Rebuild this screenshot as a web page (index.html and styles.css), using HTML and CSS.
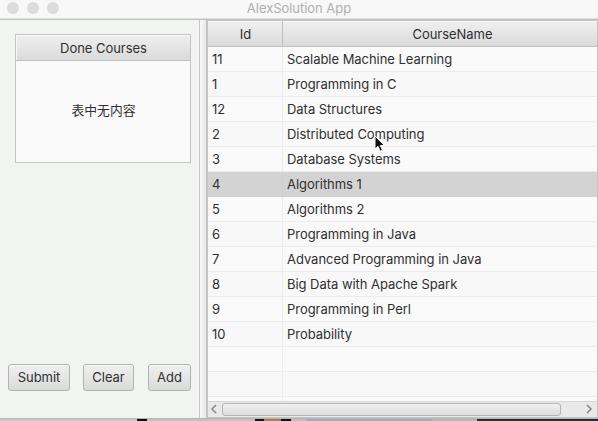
FILE: index.html
```html
<!DOCTYPE html>
<html lang="en">
<head>
<meta charset="utf-8">
<title>AlexSolution App</title>
<link rel="stylesheet" href="styles.css">
</head>
<body>
<div class="window">
  <header class="titlebar">
    <div class="lights"><i></i><i></i><i></i></div>
    <span class="title">AlexSolution App</span>
  </header>
  <main class="split">
    <section class="left">
      <div class="done">
        <div class="done-head">Done Courses</div>
        <div class="done-body" lang="zh">表中无内容</div>
      </div>
      <div class="buttons">
        <button class="submit">Submit</button>
        <button class="clear">Clear</button>
        <button class="add">Add</button>
      </div>
    </section>
    <div class="divider"></div>
    <section class="table">
      <div class="row head"><span>Id</span><span>CourseName</span></div>
      <div class="rows">
        <div class="row"><span>11</span><span>Scalable Machine Learning</span></div>
        <div class="row"><span>1</span><span>Programming in C</span></div>
        <div class="row"><span>12</span><span>Data Structures</span></div>
        <div class="row"><span>2</span><span>Distributed Computing</span></div>
        <div class="row"><span>3</span><span>Database Systems</span></div>
        <div class="row selected"><span>4</span><span>Algorithms 1</span></div>
        <div class="row"><span>5</span><span>Algorithms 2</span></div>
        <div class="row"><span>6</span><span>Programming in Java</span></div>
        <div class="row"><span>7</span><span>Advanced Programming in Java</span></div>
        <div class="row"><span>8</span><span>Big Data with Apache Spark</span></div>
        <div class="row"><span>9</span><span>Programming in Perl</span></div>
        <div class="row"><span>10</span><span>Probability</span></div>
        <div class="row"><span></span><span></span></div>
        <div class="row"><span></span><span></span></div>
        <div class="row"><span></span><span></span></div>
      </div>
      <div class="scroll">
        <svg width="14" height="16" viewBox="0 0 14 16"><path d="M8 4 4 8l4 4"/></svg>
        <div class="thumb"></div>
        <svg class="next" width="14" height="16" viewBox="0 0 14 16"><path d="M4 4l4 4-4 4"/></svg>
      </div>
    </section>
  </main>
  <footer class="desktop"></footer>
</div>
<svg class="cursor" width="12" height="18" viewBox="0 0 12 18"><path d="M1 1v13l3-2.700 2.200 4.900 2.300-1-2.200-4.700H10.500z"/></svg>
</body>
</html>
```

FILE: styles.css
```css
* { box-sizing: border-box; }
body { margin: 0; overflow: hidden; font: 13px/16px Inter, "Noto Sans CJK SC", sans-serif; letter-spacing: -0.04px; color: #303030; }
.window { width: 598px; height: 421px; display: flex; flex-direction: column; background: #f2f4f2; }
.titlebar { height: 20px; flex: none; display: grid; grid-template-columns: 60px 1fr 60px; background: #f7f8f7; border-bottom: 1px solid #c4c4c4; box-shadow: inset 0 -1px #dedede; }
.lights { display: flex; gap: 8px; padding: 2px 0 0 7px; }
.lights i { width: 12px; height: 12px; border-radius: 50%; background: #dcdcdc; }
.title { text-align: center; color: #b0b0b0; line-height: 17px; }
.split { flex: 1; min-height: 0; display: flex; }
.left { width: 200px; border-right: 1px solid #c6c6c6; padding: 14px 8px 27px; display: flex; flex-direction: column; justify-content: space-between; }
.done { width: 176px; height: 129px; margin-left: 7px; border: 1px solid #c4c4c4; background: #fafafa; display: flex; flex-direction: column; }
.done-head { height: 26px; line-height: 27px; padding-left: 1px; text-align: center; background: linear-gradient(#efefef, #dadada); border-bottom: 1px solid #c0c0c0; box-shadow: inset 1px 1px #f8f8f8; }
.done-body { flex: 1; display: flex; align-items: center; justify-content: center; padding: 0 0 1px 1px; font-size: 12.8px; letter-spacing: 0; }
.buttons { display: flex; }
button { height: 27px; padding: 0 0 1px; font: inherit; letter-spacing: inherit; color: inherit; border: 1px solid #b3b3b3; border-radius: 3px; background: linear-gradient(#f0f0f0, #dadada); box-shadow: inset 0 1px #fafafa; }
.submit { width: 62px; }
.clear { width: 51px; margin-left: 13px; }
.add { width: 43px; margin-left: 14px; }
.divider { width: 6px; background: linear-gradient(90deg, #fafafa, #e6e7e6); }
.table { width: 392px; border: solid #c4c4c4; border-width: 1px 1px 1px 2px; background: #fafafa; display: flex; flex-direction: column; }
.row { height: 25px; display: grid; grid-template: 100% / 75px 1fr; line-height: 25px; }
.row span { padding-left: 4px; border-bottom: 1px solid #ececec; white-space: nowrap; }
.row span:first-child { border-right: 1px solid #ececec; }
.row:nth-child(even) { background: #f8f8f8; }
.row.head { height: 26px; flex: none; background: linear-gradient(#f0f0f0, #d9d9d9); text-align: center; line-height: 27px; box-shadow: inset 0 1px #f8f8f8; }
.head span, .head span:first-child { padding: 0 0 0 1px; border-color: #c0c0c0; }
.head span:last-child { padding-left: 25px; }
.rows { flex: 1; min-height: 0; overflow: hidden; }
.row.selected { background: #d3d3d3; }
.row.selected span { border-color: #cfcfcf; }
.scroll { height: 16px; flex: none; display: flex; background: #e9e9e9; border-top: 1px solid #d8d8d8; }
.scroll svg { flex: none; margin-top: -1px; }
.scroll path { fill: none; stroke: #858585; stroke-width: 1.5; }
.thumb { width: 339px; height: 13px; margin-top: 1px; border: 1px solid #b4b4b4; border-radius: 3px; background: linear-gradient(#efefef, #dedede); }
.next { margin-left: auto; }
.desktop { height: 3px; flex: none; border-top: 1px solid #b5b5b5; background: linear-gradient(90deg, #c9c9c9 137px, #111 137px 147px, #c5c2be 147px 255px, #171513 255px 264px, #a57e56 264px 281px, #111 281px 291px, #c1bfbc 291px 306px, #9fb0bb 306px 432px, #b8b8b6 432px 477px, #222a35 477px); }
.cursor { position: absolute; left: 374px; top: 135px; }
.cursor path { fill: #111; stroke: #fafafa; stroke-width: 1; }
```
